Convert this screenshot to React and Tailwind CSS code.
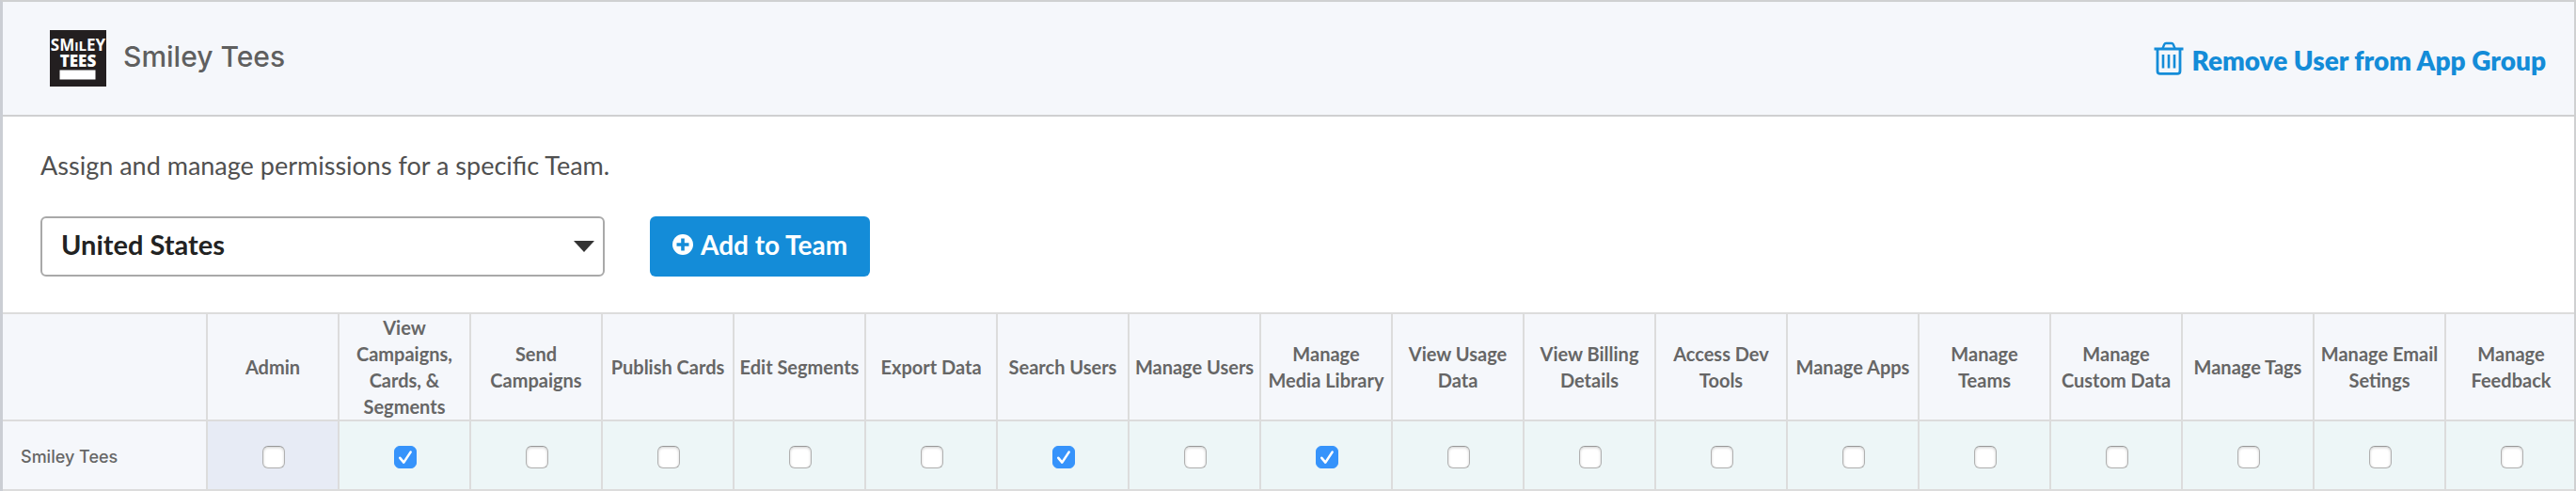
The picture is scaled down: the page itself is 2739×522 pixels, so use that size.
import React from "react";

const permissions = [
  { name: "Admin", admin: true },
  { name: "View Campaigns, Cards, & Segments", checked: true },
  { name: "Send Campaigns" },
  { name: "Publish Cards" },
  { name: "Edit Segments" },
  { name: "Export Data" },
  { name: "Search Users", checked: true },
  { name: "Manage Users" },
  { name: "Manage Media Library", checked: true },
  { name: "View Usage Data" },
  { name: "View Billing Details" },
  { name: "Access Dev Tools" },
  { name: "Manage Apps" },
  { name: "Manage Teams" },
  { name: "Manage Custom Data" },
  { name: "Manage Tags" },
  { name: "Manage Email Setings" },
  { name: "Manage Feedback" },
];

function Logo() {
  return (
    <svg viewBox="0 0 60 60" className="size-[60px] shrink-0" role="img" aria-label="Smiley Tees logo">
      <rect width="60" height="60" fill="#231f20" />
      <g fill="#fff" fontFamily="'Open Sans', sans-serif" fontWeight="800" fontSize="17" textAnchor="middle">
        <text x="30" y="22" fontWeight="700">
          SM<tspan fontSize="13">I</tspan><tspan fontSize="15">L</tspan>EY
        </text>
        <text x="30" y="39">TEES</text>
      </g>
      <rect x="10.5" y="42.5" width="38" height="10" fill="#fff" />
    </svg>
  );
}

function TrashIcon() {
  return (
    <svg viewBox="0 0 32 36" className="h-9 w-8 shrink-0" fill="none" stroke="currentColor" aria-hidden="true">
      <path d="M0.5 8H31.5" strokeWidth="3" />
      <path d="M9.5 7.5L11.2 3.2Q11.8 2 13 2H19Q20.2 2 20.8 3.2L22.5 7.5" strokeWidth="2.4" />
      <path d="M4 8.5V31.5Q4 34.4 6.9 34.4H25.1Q28 34.4 28 31.5V8.5" strokeWidth="2.8" />
      <path d="M10 14V28.5M16 14V28.5M22 14V28.5" strokeWidth="2.6" />
    </svg>
  );
}

function PlusCircle() {
  return (
    <svg viewBox="0 0 22 22" className="size-[22px] shrink-0" aria-hidden="true">
      <circle cx="11" cy="11" r="11" fill="#fff" />
      <path d="M11 4.5V17.5M4.5 11H17.5" stroke="#148cd8" strokeWidth="3.6" />
    </svg>
  );
}

function PermissionBox({ name, checked }) {
  return (
    <span className="inline-grid size-6 place-items-center align-middle">
      <input
        type="checkbox"
        aria-label={name}
        defaultChecked={checked}
        className="peer col-start-1 row-start-1 size-6 appearance-none rounded-md border border-[#b0b0b0] border-t-[#989898] bg-white shadow-[inset_0_1px_3px_rgba(0,0,0,0.2)] checked:border-[#3693fb] checked:bg-[#3693fb] checked:shadow-none"
      />
      <svg viewBox="0 0 24 24" className="pointer-events-none invisible col-start-1 row-start-1 size-6 peer-checked:visible" fill="none" stroke="#fff" strokeWidth="2.6" strokeLinecap="round" strokeLinejoin="round" aria-hidden="true">
        <path d="M6.3 12.8L10.3 17.6L17.6 6.6" />
      </svg>
    </span>
  );
}

export default function App() {
  return (
    <section className="border-t-2 border-r-2 border-l-3 border-[#cfd0d1] border-l-[#cbced4] bg-white font-[Lato,sans-serif]">
      <header className="flex items-center justify-between border-b-2 border-[#cfd0d1] bg-[#f5f7fb] py-[30px] pr-[30px] pl-[50px]">
        <div className="flex items-center gap-[18px]">
          <Logo />
          <h1 className="pb-1 font-[Inter,sans-serif] text-[30px] leading-9 font-medium text-[#5f5f5f]">Smiley Tees</h1>
        </div>
        <a href="#remove" className="flex items-center gap-2 text-[#148cd8]">
          <TrashIcon />
          <span className="pt-1 text-[28px] leading-8 font-extrabold">Remove User from App Group</span>
        </a>
      </header>

      <div className="px-10 pt-9 pb-[38px]">
        <label htmlFor="team" className="block text-[27px] leading-8 text-[#505050]">
          Assign and manage permissions for a specific Team.
        </label>
        <div className="mt-[38px] flex items-center gap-12">
          <div className="relative w-[600px]">
            <select id="team" className="h-16 w-full appearance-none rounded-md border-2 border-[#a9a9a9] bg-white px-5 pb-1 text-[29px] font-bold text-[#222222]">
              <option>United States</option>
            </select>
            <svg viewBox="0 0 22 12" className="pointer-events-none absolute top-[26px] right-[11px] h-3 w-[22px]" aria-hidden="true">
              <path d="M0 0H22L11 12Z" fill="#333" />
            </svg>
          </div>
          <button type="button" className="flex h-16 items-center gap-2 rounded-md bg-[#148cd8] px-6 pb-1 text-[28px] font-bold text-white">
            <PlusCircle />
            Add to Team
          </button>
        </div>
      </div>

      <div className="overflow-hidden">
        <table className="w-[calc(100%+2px)] table-fixed border-separate border-spacing-0 border-y-2 border-[#dcdcdc] text-[#666666]">
          <thead>
            <tr className="h-28 bg-[#f5f7fb]">
              <td className="w-[216px]" />
              {permissions.map((p) => (
                <th key={p.name} scope="col" className="border-l-2 border-[#dcdcdc] px-1 py-0 text-center text-[20px] leading-7 font-bold">
                  {p.name}
                </th>
              ))}
            </tr>
          </thead>
          <tbody>
            <tr className="h-[74px]">
              <th scope="row" className="border-t-2 border-[#dcdcdc] bg-[#f5f7fb] pt-1 pr-0 pb-0 pl-[19px] text-left font-[Inter,sans-serif] text-[18px] leading-7 font-medium">
                Smiley Tees
              </th>
              {permissions.map((p) => (
                <td
                  key={p.name}
                  className={
                    p.admin
                      ? "border-t-2 border-l-2 border-[#dcdcdc] bg-[#e7ebf5] pt-0.5 pr-0 pb-0 pl-0.5 text-center"
                      : "border-t-2 border-l-2 border-[#dcdcdc] bg-[#edf6f7] pt-0.5 pr-0 pb-0 pl-0.5 text-center"
                  }
                >
                  <PermissionBox name={p.name} checked={p.checked} />
                </td>
              ))}
            </tr>
          </tbody>
        </table>
      </div>
    </section>
  );
}
